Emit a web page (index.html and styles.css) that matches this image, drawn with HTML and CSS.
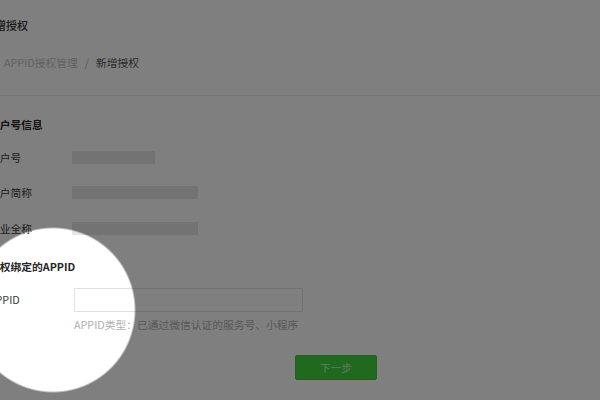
FILE: index.html
```html
<!DOCTYPE html>
<html lang="zh-CN">
<head>
<meta charset="utf-8">
<title>新增授权</title>
<link rel="stylesheet" href="styles.css">
</head>
<body>
<div class="page">
  <header class="page-head">
    <h1 class="title">新增授权</h1>
    <nav class="crumbs">
      <span class="crumb">APPID授权管理</span>
      <span class="sep">/</span>
      <span class="crumb current">新增授权</span>
    </nav>
  </header>

  <section class="form">
    <h2 class="section-title">账户号信息</h2>
    <div class="row">
      <span class="label">账户号</span>
      <span class="value-bar short"></span>
    </div>
    <div class="row">
      <span class="label">账户简称</span>
      <span class="value-bar"></span>
    </div>
    <div class="row">
      <span class="label">企业全称</span>
      <span class="value-bar"></span>
    </div>

    <h2 class="section-title second">授权绑定的APPID</h2>
    <div class="row input-row">
      <span class="label label-appid">APPID</span>
      <div class="field">
        <input class="text-input" type="text">
        <p class="hint">APPID类型：已通过微信认证的服务号、小程序</p>
      </div>
    </div>

    <div class="actions">
      <button class="btn-next" type="button">下一步</button>
    </div>
  </section>
</div>
<div class="spotlight"></div>
</body>
</html>
```

FILE: styles.css
```css
html, body {
  margin: 0;
  padding: 0;
  background: #ffffff;
}
body {
  width: 600px;
  height: 400px;
  overflow: hidden;
  font-family: "Noto Sans CJK SC", "Noto Sans", sans-serif;
  font-size: 10.75px;
  color: #333333;
}
.page {
  margin-left: -11px;
  padding-top: 15px;
}
.page-head {
  border-bottom: 1px solid #e8e8e8;
  margin-right: -11px;
  padding-bottom: 23px;
}
.title {
  margin: 0 0 0 -5px;
  font-size: 11px;
  font-weight: 500;
  line-height: 20px;
  color: #333333;
}
.crumbs {
  margin-top: 19px;
  margin-left: 15px;
  display: flex;
  gap: 7px;
  line-height: 18px;
}
.crumb {
  color: #c4c4c4;
}
.crumb.current {
  color: #555555;
}
.sep {
  color: #b4b4b4;
}
.form {
  padding-top: 20px;
}
.section-title {
  margin: 0;
  font-size: 10.75px;
  font-weight: 700;
  line-height: 18px;
  color: #262626;
  margin-bottom: 13px;
}
.section-title.second {
  margin-top: 20px;
  margin-bottom: 12px;
}
.row {
  display: flex;
  align-items: center;
  height: 20px;
  margin-bottom: 15.5px;
}
.label {
  width: 83px;
  flex: none;
  color: #3a3a3a;
}
.label-appid {
  padding-left: 0;
}
.value-bar {
  display: block;
  width: 126px;
  height: 13px;
  background: #e6e6e6;
}
.value-bar.short {
  width: 83px;
}
.input-row {
  height: auto;
  align-items: flex-start;
  margin-bottom: 0;
}
.input-row .label {
  line-height: 24px;
}
.field {
  margin-left: 2px;
}
.text-input {
  display: block;
  box-sizing: border-box;
  width: 229px;
  height: 24px;
  margin: 0;
  padding: 0 8px;
  border: 1px solid #e2e2e2;
  border-radius: 1px;
  background: #ffffff;
  font: inherit;
  outline: none;
}
.hint {
  margin: 5px 0 0;
  line-height: 16px;
  color: #b0b0b0;
}
.actions {
  display: flex;
  padding-left: 306px;
  margin-top: 22px;
}
.btn-next {
  box-sizing: border-box;
  width: 82px;
  height: 25px;
  border: 1px solid #3cc03a;
  border-radius: 2px;
  background: #40d43e;
  color: #c8ecc8;
  font-family: inherit;
  font-size: 10.75px;
  padding: 0;
}
.spotlight {
  position: fixed;
  left: 0;
  top: 0;
  width: 600px;
  height: 400px;
  pointer-events: none;
  background: radial-gradient(circle at 53px 310px, rgba(0, 0, 0, 0) 81px, rgba(0, 0, 0, 0.5) 83px);
}
```
